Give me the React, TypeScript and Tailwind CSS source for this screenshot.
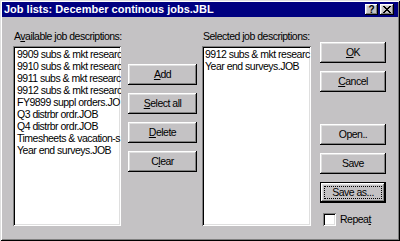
import React from "react";

const raised =
  "shadow-[inset_-1px_-1px_#000,inset_1px_1px_#fff,inset_-2px_-2px_#808080,inset_2px_2px_#dfdfdf]";
const sunken =
  "shadow-[inset_1px_1px_#808080,inset_-1px_-1px_#fff,inset_2px_2px_#000,inset_-2px_-2px_#dfdfdf]";

function U({ children }: { children: React.ReactNode }) {
  return <span className="underline underline-offset-[1px] decoration-1">{children}</span>;
}

function Btn({ children, mt }: { children: React.ReactNode; mt?: string }) {
  return (
    <div
      className={`h-[21px] flex items-center justify-center bg-[#c4c2c4] ${raised} ${mt ?? ""}`}
    >
      <span className="whitespace-nowrap">{children}</span>
    </div>
  );
}

const leftItems = [
  "9909 subs & mkt researc",
  "9910 subs & mkt researc",
  "9911 subs & mkt researc",
  "9912 subs & mkt researc",
  "FY9899 suppl orders.JO",
  "Q3 distrbr ordr.JOB",
  "Q4 distrbr ordr.JOB",
  "Timesheets & vacation-s",
  "Year end surveys.JOB",
];
const rightItems = ["9912 subs & mkt researc", "Year end surveys.JOB"];

export default function App() {
  return (
    <div
      className={`w-[400px] h-[241px] bg-[#c4c2c4] p-[2px] flex flex-col text-black font-['Liberation_Sans',Arial,sans-serif] text-[10.5px] tracking-[-0.5px] shadow-[inset_1px_1px_#dfdfdf,inset_-1px_-1px_#000,inset_2px_2px_#fff,inset_-2px_-2px_#808080]`}
    >
      {/* Title bar */}
      <div className="h-[15px] bg-[#000080] flex items-center pl-[2px] pr-[4px]">
        <div className="flex-1 text-white font-bold text-[11px] tracking-normal leading-[15px] whitespace-nowrap">
          Job lists: December continous jobs.JBL
        </div>
        <div
          className={`w-[13px] h-[11px] bg-[#c4c2c4] ${raised} flex items-center justify-center text-[10px] font-bold leading-none tracking-normal`}
        >
          ?
        </div>
        <div
          className={`ml-[2px] w-[14px] h-[11px] bg-[#c4c2c4] ${raised} flex items-center justify-center`}
        >
          <svg width="8" height="7" viewBox="0 0 8 7">
            <path d="M0 0h2v1h1v1h2V1h1V0h2v1H7v1H6v1H5v1h1v1h1v1h1v1H6V6H5V5H3v1H2v1H0V6h1V5h1V4h1V3H2V2H1V1H0z" fill="#000" />
          </svg>
        </div>
      </div>

      {/* Body */}
      <div className="flex flex-row pl-[11px] pt-[13px]">
        {/* Left list */}
        <div className="w-[108px] flex flex-col">
          <div className="h-[13px] leading-[13px] pl-[1px] whitespace-nowrap">
            A<U>v</U>ailable job descriptions:
          </div>
          <div
            className={`mt-[3px] h-[180px] bg-white ${sunken} pt-[2px] pl-[4px] pr-[1px] overflow-hidden`}
          >
            {leftItems.map((t) => (
              <div key={t} className="h-[12px] leading-[12px] whitespace-nowrap">
                {t}
              </div>
            ))}
          </div>
        </div>

        {/* Middle buttons */}
        <div className="ml-[7px] w-[69px] pt-[34px] flex flex-col gap-[8px]">
          <Btn>
            <U>A</U>dd
          </Btn>
          <Btn>
            <U>S</U>elect all
          </Btn>
          <Btn>
            <U>D</U>elete
          </Btn>
          <Btn>
            C<U>l</U>ear
          </Btn>
        </div>

        {/* Right list */}
        <div className="ml-[5px] w-[109px] flex flex-col">
          <div className="h-[13px] leading-[13px] pl-[1px] whitespace-nowrap">
            Selected job descriptions:
          </div>
          <div
            className={`mt-[3px] h-[180px] bg-white ${sunken} pt-[2px] pl-[3px] pr-[1px] overflow-hidden`}
          >
            {rightItems.map((t) => (
              <div key={t} className="h-[12px] leading-[12px] whitespace-nowrap">
                {t}
              </div>
            ))}
          </div>
        </div>

        {/* Right buttons */}
        <div className="ml-[9px] w-[66px] pt-[12px] flex flex-col">
          <Btn>
            <U>O</U>K
          </Btn>
          <Btn mt="mt-[8px]">
            <U>C</U>ancel
          </Btn>
          <Btn mt="mt-[32px]">Open..</Btn>
          <Btn mt="mt-[8px]">Save</Btn>
          <div className="mt-[8px] h-[21px] border border-black">
            <div className={`h-full bg-[#c4c2c4] ${raised} p-[3px]`}>
              <div className="h-full border border-dotted border-black flex items-center justify-center">
                Save as...
              </div>
            </div>
          </div>
          <div className="mt-[10px] flex items-center pl-[3px]">
            <div className={`w-[13px] h-[13px] bg-white ${sunken}`} />
            <span className="ml-[4px] leading-[13px]">
              Repea<U>t</U>
            </span>
          </div>
        </div>
      </div>
    </div>
  );
}
